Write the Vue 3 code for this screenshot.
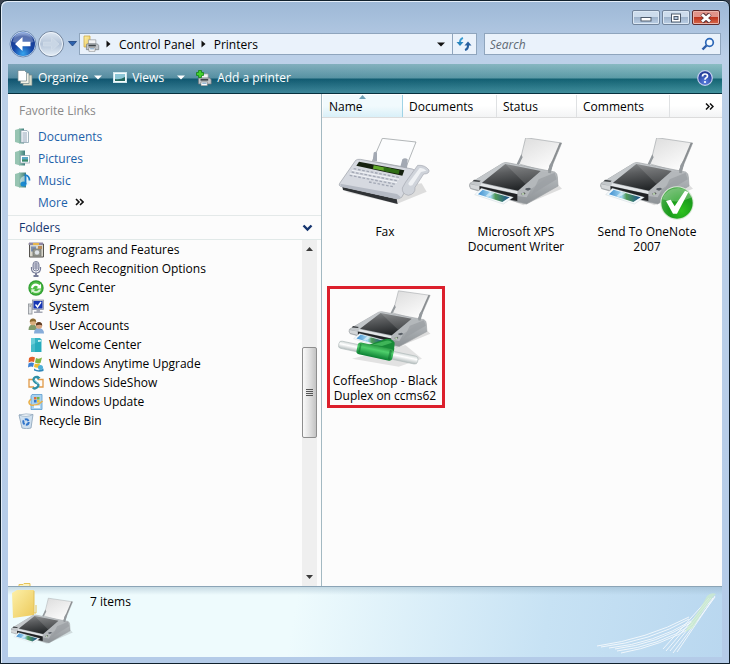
<script setup>
import { ref } from 'vue'

const search = ref('')

const columns = [
  { label: 'Name', key: 'name' },
  { label: 'Documents', key: 'documents' },
  { label: 'Status', key: 'status' },
  { label: 'Comments', key: 'comments' },
]

const favorites = [
  { label: 'Documents', icon: 'fav-doc' },
  { label: 'Pictures', icon: 'fav-pic' },
  { label: 'Music', icon: 'fav-music' },
]

const folders = [
  { label: 'Programs and Features', icon: 't-programs' },
  { label: 'Speech Recognition Options', icon: 't-speech' },
  { label: 'Sync Center', icon: 't-sync' },
  { label: 'System', icon: 't-system' },
  { label: 'User Accounts', icon: 't-users' },
  { label: 'Welcome Center', icon: 't-welcome' },
  { label: 'Windows Anytime Upgrade', icon: 't-upgrade' },
  { label: 'Windows SideShow', icon: 't-sideshow' },
  { label: 'Windows Update', icon: 't-update' },
  { label: 'Recycle Bin', icon: 't-recycle', root: true },
]

const printers = [
  { name: 'Fax', icon: 'i-fax', box: '18 54 330 258' },
  { name: 'Microsoft XPS Document Writer', icon: 'i-printer', box: '6 54 330 258' },
  { name: 'Send To OneNote 2007', icon: 'i-printer', box: '6 54 330 258', isDefault: true },
  { name: 'CoffeeShop - Black Duplex on ccms62', icon: 'i-network', box: '27 21 330 258', marked: true },
]
</script>

<template>
  <div class="window">
    <svg class="defs" width="0" height="0" aria-hidden="true">
      <defs>
        <linearGradient id="g-lid" x1="0" y1="0" x2="0.3" y2="1">
          <stop offset="0" stop-color="#8b8e90" /><stop offset="0.4" stop-color="#5b5d5f" /><stop offset="1" stop-color="#25282a" />
        </linearGradient>
        <linearGradient id="g-paper" x1="0" y1="0" x2="0.6" y2="1">
          <stop offset="0" stop-color="#dcdcdc" /><stop offset="1" stop-color="#fdfdfd" />
        </linearGradient>
        <linearGradient id="g-side" x1="0" y1="0" x2="0" y2="1">
          <stop offset="0" stop-color="#c6cacd" /><stop offset="1" stop-color="#8d9296" />
        </linearGradient>
        <linearGradient id="g-photo" x1="0" y1="0" x2="1" y2="0">
          <stop offset="0" stop-color="#3f8ed0" /><stop offset="0.4" stop-color="#9fd4ee" /><stop offset="0.55" stop-color="#4f9a58" /><stop offset="1" stop-color="#1b4f92" />
        </linearGradient>
        <radialGradient id="g-check" cx="0.65" cy="0.75" r="0.8">
          <stop offset="0" stop-color="#2fc21f" /><stop offset="0.5" stop-color="#1a9c1b" /><stop offset="1" stop-color="#4fae50" />
        </radialGradient>
        <linearGradient id="g-pipe" x1="0" y1="0" x2="0" y2="1">
          <stop offset="0" stop-color="#2b9a45" /><stop offset="0.35" stop-color="#4fcf6c" /><stop offset="1" stop-color="#0b8032" />
        </linearGradient>
        <linearGradient id="g-glass" x1="0" y1="0" x2="0" y2="1">
          <stop offset="0" stop-color="#d3dad9" /><stop offset="0.4" stop-color="#ffffff" /><stop offset="1" stop-color="#b5bebe" />
        </linearGradient>
        <linearGradient id="g-book" x1="0" y1="0" x2="1" y2="0">
          <stop offset="0" stop-color="#8fc0ac" /><stop offset="1" stop-color="#3f7d7c" />
        </linearGradient>
        <linearGradient id="g-folder" x1="0" y1="0" x2="1" y2="1">
          <stop offset="0" stop-color="#fdf0a8" /><stop offset="1" stop-color="#ecc95a" />
        </linearGradient>
        <radialGradient id="g-back" cx="0.5" cy="0.9" r="0.9">
          <stop offset="0" stop-color="#37a5ee" /><stop offset="0.45" stop-color="#1746a6" /><stop offset="0.8" stop-color="#1a3d93" /><stop offset="1" stop-color="#8fb0e6" />
        </radialGradient>
        <linearGradient id="g-fwd" x1="0" y1="0" x2="0" y2="1">
          <stop offset="0" stop-color="#dfe8f3" /><stop offset="0.5" stop-color="#b4c4d8" /><stop offset="1" stop-color="#e6eff8" />
        </linearGradient>
        <radialGradient id="g-help" cx="0.5" cy="0.8" r="0.8">
          <stop offset="0" stop-color="#5a7fe0" /><stop offset="1" stop-color="#1a2f8c" />
        </radialGradient>

        <g id="i-printer">
          <path d="M60 205 L190 256 L306 206 L290 190 Z" fill="#000" opacity="0.12" />
          <path d="M197 53 L305 69 L268 158 L178 132 Z" fill="url(#g-paper)" stroke="#a3a7aa" stroke-width="2" />
          <path d="M305 69 L268 158 L262 155 L299 68 Z" fill="#8a8e91" />
          <path d="M30 190 L128 130 Q134 127 142 128 L284 156 Q292 160 292 170 L294 198 L200 252 L172 246 L32 206 Q26 198 30 190 Z" fill="url(#g-side)" stroke="#9a9ea1" stroke-width="2" />
          <path d="M30 190 L128 130 L142 128 L66 190 L62 200 Z" fill="#c3c7ca" />
          <path d="M172 213 L240 154 L284 157 L214 206 L200 232 L172 228 Z" fill="#b4b8bb" />
          <path d="M236 178 L284 158 L290 178 L214 224 Z" fill="#999da1" opacity="0.7" />
          <path d="M66 188 L136 132 L242 153 L174 212 Z" fill="url(#g-lid)" />
          <path d="M136 132 L242 153 L196 192 Z" fill="#fff" opacity="0.13" />
          <path d="M64 190 L173 214 L172 222 L60 197 Z" fill="#e3e6e8" />
          <path d="M58 198 L172 223 L172 243 L150 239 L58 212 Z" fill="#202224" />
          <path d="M30 193 L58 198 L58 211 L32 204 Z" fill="#d4d7d9" />
          <path d="M42 179 L62 182 L58 186 L38 184 Z" fill="#3c3f42" />
          <path d="M64 205 L160 232 L130 252 L44 224 Z" fill="#f5fafc" stroke="#b9c4cb" stroke-width="1" />
          <path d="M68 209 L149 232 L127 246 L54 223 Z" fill="url(#g-photo)" />
          <path d="M90 216 L104 220 L84 231 L76 229 Z" fill="#eaf7fb" opacity="0.6" />
          <path d="M197 205 L208 203 L214 207 L204 212 L196 209 Z" fill="#565c63" />
          <path d="M183 221 L193 217 L197 221 L187 226 Z" fill="#5f665f" />
          <circle cx="189" cy="222" r="3" fill="#c8e4bd" />
          <path d="M184 103 L188 112 L176 134 L170 132 Z M276 123 L279 133 L272 160 L264 158 L268 136 Z" fill="#94999d" />
        </g>

        <g id="i-check">
          <circle cx="258" cy="249" r="50" fill="#d6e7d3" />
          <circle cx="258" cy="249" r="47" fill="url(#g-check)" />
          <path d="M214 238 Q224 206 262 204 Q296 208 302 232 Q262 254 214 238 Z" fill="#fff" opacity="0.25" />
          <path d="M225 243 L239 239 L251 259 L282 212 L292 217 L258 281 L246 281 Z" fill="#fff" />
        </g>

        <g id="i-fax">
          <path d="M60 215 L215 252 L305 215 L290 190 Z" fill="#000" opacity="0.12" />
          <path d="M172 55 L273 66 L243 142 L142 124 Z" fill="#fcfdfe" stroke="#8d9296" stroke-width="2" />
          <path d="M146 98 Q152 92 156 99 L156 124 L143 122 Z M232 118 Q240 112 248 118 L246 146 L226 140 Z" fill="#a3a9b3" />
          <path d="M52 200 L215 237 L218 252 L54 210 Z" fill="#2f3235" />
          <path d="M92 121 Q96 117 106 118 L262 147 Q272 150 272 158 L230 232 Q222 238 212 236 L46 199 Q40 196 44 190 Z" fill="#d6d9e0" stroke="#9a9ea6" stroke-width="2" />
          <path d="M46 191 L216 222 L228 232 L216 237 L48 200 Z" fill="#b5bac4" />
          <path d="M102 125 L238 151 L232 167 L94 137 Z" fill="#16210f" />
          <path d="M146 136 L198 146 L196 156 L144 146 Z" fill="#61a92b" />
          <path d="M176 141 L224 151 L221 162 L176 153 Z" fill="#2f6d15" />
          <g stroke="#a2a7b4" stroke-width="4" stroke-dasharray="8 5" fill="none">
            <path d="M86 146 L226 173" /><path d="M80 156 L220 183" /><path d="M74 166 L214 193" /><path d="M132 186 L208 201" />
          </g>
          <path d="M81 151 L222 178 M75 161 L216 188" stroke="#f2f4f8" stroke-width="3" fill="none" />
          <path d="M242 186 L278 136 Q300 134 312 150 Q314 162 296 162 L270 202 Q272 222 250 226 Q230 222 232 204 Z" fill="#cfd3da" stroke="#a4a8b0" stroke-width="2" />
          <path d="M250 190 L284 144 Q296 142 304 152 L288 156 L262 196 Q250 200 250 190 Z" fill="#eff1f4" />
        </g>

        <g id="i-network">
          <path d="M90 236 L230 260 L300 236 L250 195 Z" fill="#000" opacity="0.1" />
          <use href="#i-printer" transform="translate(56 -12) scale(0.88 0.84)" />
          <path d="M136 196 L190 177 Q210 174 218 188 L216 214 L180 222 Z" fill="#188b38" />
          <path d="M150 194 L192 182 Q206 180 210 188 L180 198 Z" fill="#3fb458" />
          <g transform="rotate(12 170 217)">
            <rect x="48" y="207" width="70" height="22" rx="8" fill="url(#g-glass)" stroke="#b3bcbc" stroke-width="2" />
            <rect x="206" y="205" width="84" height="24" rx="9" fill="url(#g-glass)" stroke="#b3bcbc" stroke-width="2" />
            <rect x="104" y="199" width="110" height="36" rx="9" fill="url(#g-pipe)" />
            <rect x="110" y="204" width="5" height="26" rx="2" fill="#0a6a29" opacity="0.5" />
            <rect x="201" y="203" width="7" height="29" rx="3" fill="#0a6a29" opacity="0.5" />
          </g>
        </g>

        <g id="fav-doc">
          <path d="M0 2 L5 0.500 L5 15.500 L0 14 Z" fill="#97c4b2" /><path d="M4 0.500 H9 V15.500 H4 Z" fill="url(#g-book)" />
          <path d="M6 2.500 H12 L13.500 4 V14.500 H6 Z" fill="#f8fbfd" stroke="#8ea3b0" stroke-width="0.800" />
          <path d="M7.500 5 H12 M7.500 7 H12 M7.500 9 H12 M7.500 11 H12 M7.500 13 H12" stroke="#7d93a8" stroke-width="0.800" />
        </g>
        <g id="fav-pic">
          <path d="M0 2 L5 0.500 L5 15.500 L0 14 Z" fill="#97c4b2" /><path d="M4 0.500 H10 V15.500 H4 Z" fill="url(#g-book)" />
          <rect x="5.500" y="5.500" width="9" height="7.500" fill="#fff" stroke="#9aaab5" stroke-width="0.800" />
          <rect x="7" y="7" width="6" height="4.500" fill="#5aa6c4" /><rect x="7" y="9.500" width="6" height="2" fill="#3d8a66" />
        </g>
        <g id="fav-music">
          <path d="M0 2 L5 0.500 L5 15.500 L0 14 Z" fill="#97c4b2" /><path d="M4 0.500 H11 V15.500 H4 Z" fill="url(#g-book)" />
          <circle cx="10" cy="9" r="5" fill="#d8f0f8" opacity="0.6" />
          <ellipse cx="8.500" cy="12" rx="3" ry="2.500" fill="#1b8bd0" />
          <path d="M10.500 12 V3 Q14.500 4 14.500 8.500" stroke="#1b7fc8" stroke-width="1.800" fill="none" />
        </g>

        <g id="t-programs">
          <path d="M0.500 2 H15.500 V15 H1.500 V3" fill="#d8d6cb" stroke="#55534f" /><path d="M1 0.500 H15 V3 H1 Z" fill="#8e86a4" />
          <rect x="5" y="1" width="6" height="2" fill="#e8b64c" /><rect x="3" y="4.500" width="5" height="5" fill="#7c8fb2" />
          <rect x="5" y="7" width="8" height="7" fill="#95978f" stroke="#6d6f6a" stroke-width="0.700" /><circle cx="9" cy="10.500" r="2.200" fill="#dfe4ea" />
          <rect x="10" y="4" width="4" height="3" fill="#b98a5a" />
        </g>
        <g id="t-speech">
          <rect x="5" y="0.500" width="6" height="9.500" rx="3" fill="#e7e9f1" stroke="#7d829c" />
          <path d="M5 3 H11 M5 5 H11 M5 7 H11 M8 1 V9" stroke="#7d829c" stroke-width="0.900" />
          <path d="M3.500 6 V8 Q4 12 8 12 Q12 12 12.500 8 V6" fill="none" stroke="#757b97" stroke-width="1.200" /><path d="M8 12 V14 M5.500 15 H10.500" stroke="#757b97" stroke-width="1.800" />
        </g>
        <g id="t-sync">
          <circle cx="8" cy="8" r="7.700" fill="#2f9e31" /><circle cx="8" cy="8" r="6.500" fill="#4dbb45" />
          <path d="M3 8 Q3.500 3.500 8 3.500 Q10 3.500 11.500 5 L13 4 V8.500 H8.500 L10 7 Q8 5 6 6.500 Q5 7.500 5 8.500 Z" fill="#fff" />
          <path d="M13 9.500 Q12 13 8 13 Q6 13 4.500 11.800 L3.300 13 V9.300 H7 L6 10.500 Q8 12 10 10.500 L10.800 9.500 Z" fill="#d7f4d2" />
        </g>
        <g id="t-system">
          <rect x="0.500" y="5" width="3.500" height="10" fill="#dcdfe2" stroke="#8b9096" stroke-width="0.800" /><path d="M1.500 7 H3" stroke="#777" />
          <rect x="4.500" y="1" width="11" height="9.500" fill="#c6c9d2" stroke="#8288a0" stroke-width="0.700" /><rect x="5.500" y="2" width="9" height="7.500" fill="#1636b4" />
          <path d="M7.500 5.500 L9.500 8 L13 3" stroke="#fff" stroke-width="1.400" fill="none" /><path d="M8.500 11 H12 V12.500 H14.500 V14 H6 V12.500 H8.500 Z" fill="#a4a8b4" />
        </g>
        <g id="t-users">
          <path d="M0.500 12 Q0.500 6.500 5 6.500 Q9 7 9 12 Z" fill="#7f9a6b" /><circle cx="5" cy="4" r="3.200" fill="#d9b07e" /><path d="M1.800 4 Q1.800 0.500 5 0.500 Q8.200 0.500 8.200 4 Q6 2.500 1.800 4 Z" fill="#8b6a32" />
          <path d="M6 15.500 Q6 10 11 10 Q16 10.500 16 15.500 Z" fill="#86acd9" /><circle cx="11" cy="7.500" r="3.200" fill="#d8a683" /><path d="M7.800 7.500 Q7.800 4 11 4 Q14.200 4 14.200 7.500 Q12 6 7.800 7.500 Z" fill="#5d3c24" />
        </g>
        <g id="t-welcome">
          <path d="M3 1 H12 L13.500 2.500 V15 H3 Z" fill="#35b4c4" /><path d="M3 1 H7 V15 H3 Z" fill="#68cdd8" /><path d="M10 3 H13 V5 H10 Z" fill="#c5f2f4" /><path d="M3 8 L13 4 V15 H3 Z" fill="#139fb3" opacity="0.4" />
        </g>
        <g id="t-upgrade">
          <path d="M1 2 Q4 0 7 1.500 L6 6 Q3.500 5 0.500 6.500 Z" fill="#e2602b" /><path d="M8 2 Q11 3.500 14 1.500 L12.500 7 Q10 8 7 6.500 Z" fill="#82b541" />
          <path d="M0.500 7.500 Q3 6 6 7 L5 11 Q3 10 0 11.500 Z" fill="#3c80d2" /><path d="M6.800 7.500 Q9 8.500 12 7.500 L11 11.500 Q8.500 12 6 11 Z" fill="#f0be33" />
          <path d="M6 12.500 Q10 16 15.500 12.500 V15 Q10 16.500 6 14.500 Z" fill="#2f87ba" /><circle cx="12.500" cy="11.500" r="2.500" fill="#4fb0d8" />
        </g>
        <g id="t-sideshow">
          <path d="M5 4.500 H1 V12 H6 M10 4.500 H15 V12 H11" fill="none" stroke="#e19a48" stroke-width="1.300" />
          <path d="M10.500 2.500 Q6 1 5.500 4.500 Q6 7 9.500 8.500 Q12 11 8 13 Q6 14 5 12.500" fill="none" stroke="#2f8fa6" stroke-width="2.400" />
          <path d="M9 0.500 L12.500 2.500 L9.500 5 Z" fill="#2f8fa6" /><path d="M6.500 5 L10.500 9" stroke="#a9e2ec" />
        </g>
        <g id="t-update">
          <path d="M4 0.500 H14 V15.500 H3 V2 Z" fill="#a9d2ef" stroke="#5c9cce" stroke-width="0.800" /><path d="M6 3 H8.500 V5.500 H6 Z" fill="#de6a35" /><path d="M9 3 H11.500 V5.500 H9 Z" fill="#75b443" /><path d="M6 6 H8.500 V8.500 H6 Z" fill="#3374cc" /><path d="M9 6 H11.500 V8.500 H9 Z" fill="#efc53a" />
          <path d="M3 5 Q-1 9 3 11 Q9 12.500 14.500 7" fill="none" stroke="#e9b04a" stroke-width="1.600" /><rect x="6" y="11.500" width="6" height="2.500" fill="#f3f9fd" />
        </g>
        <g id="t-recycle">
          <path d="M1 2 L15 1.500 L13 15 Q8 16.500 4 15 Z" fill="#cfe0ef" stroke="#93a9bd" stroke-width="0.900" /><path d="M1 2 Q8 5 15 1.500 Q8 0 1 2 Z" fill="#f2f7fb" stroke="#93a9bd" stroke-width="0.700" />
          <circle cx="8" cy="9" r="2.700" fill="none" stroke="#2f74cb" stroke-width="2" stroke-dasharray="4.300 1.300" />
        </g>

        <g id="s-printer">
          <path d="M3 1 H12 V6 H3 Z" fill="#f3f4f5" stroke="#8a8f94" stroke-width="0.800" />
          <path d="M1 6 H14 L15.500 8 V13 H0.500 V7 Z" fill="#c2c6ca" stroke="#6f757b" stroke-width="0.800" /><path d="M3 7 H12 V9 H3 Z" fill="#3f4549" /><path d="M3.500 10.500 H11 V15 H3.500 Z" fill="#fff" stroke="#777" stroke-width="0.700" /><path d="M5 12 H10" stroke="#4f86b8" />
        </g>
      </defs>
    </svg>

    <header class="titlebar">
      <button class="cap" aria-label="Minimize">
        <svg width="12" height="9" viewBox="0 0 12 9"><rect x="1" y="4.500" width="10" height="3.500" fill="#fff" stroke="#4d5a6b" /></svg>
      </button>
      <button class="cap" aria-label="Maximize">
        <svg width="12" height="10" viewBox="0 0 12 10"><rect x="1.500" y="1" width="9" height="8" fill="#fff" stroke="#4d5a6b" /><rect x="4" y="3.500" width="4" height="3" fill="#b5c8de" stroke="#4d5a6b" /></svg>
      </button>
      <button class="cap close" aria-label="Close">
        <svg width="14" height="10" viewBox="0 0 14 10"><path d="M3 1 L11 9 M11 1 L3 9" stroke="#5b3036" stroke-width="4.500" /><path d="M3 1.500 L11 8.500 M11 1.500 L3 8.500" stroke="#fff" stroke-width="2.800" /></svg>
      </button>
    </header>

    <nav class="navrow" aria-label="Navigation">
      <div class="travel">
        <button class="plain" aria-label="Back">
          <svg width="28" height="28" viewBox="0 0 28 28"><circle cx="14" cy="14" r="13" fill="#e3edf8" stroke="#6e8cb4" /><circle cx="14" cy="14" r="12" fill="url(#g-back)" /><path d="M3.500 12 Q5 3 14 3 Q23 3 24.500 12 Q14 15 3.500 12 Z" fill="#fff" opacity="0.28" /><path d="M6 14 L13.500 7 V11.800 H21.500 V16.200 H13.500 V21 Z" fill="#fff" /></svg>
        </button>
        <button class="plain" aria-label="Forward">
          <svg width="28" height="28" viewBox="0 0 28 28"><circle cx="14" cy="14" r="12.500" fill="url(#g-fwd)" stroke="#71839b" /><circle cx="14" cy="14" r="11.500" fill="none" stroke="#eef4fa" /><path d="M22 14 L14.500 7.500 V12 H6.500 V16 H14.500 V20.500 Z" fill="#c9d6e5" stroke="#d3deea" stroke-width="0.700" /></svg>
        </button>
        <button class="plain recent" aria-label="Recent pages">
          <svg width="11" height="8" viewBox="0 0 11 8"><path d="M1.500 1.500 H9.500 L5.500 6 Z" fill="#2d62ad" stroke="#1e447e" stroke-width="0.800" /></svg>
        </button>
      </div>
      <div class="address">
        <svg class="ico" width="18" height="18" viewBox="0 0 18 18"><path d="M2 1 H8 V12 H2 Z" fill="url(#g-folder)" stroke="#c9a236" stroke-width="0.700" /><g transform="translate(4 4) scale(0.820)"><use href="#s-printer" /></g></svg>
        <svg class="sep" width="5" height="8" viewBox="0 0 5 8"><path d="M0.500 0.500 L4.500 4 L0.500 7.500 Z" fill="#111" /></svg>
        <a href="#">Control Panel</a>
        <svg class="sep" width="5" height="8" viewBox="0 0 5 8"><path d="M0.500 0.500 L4.500 4 L0.500 7.500 Z" fill="#111" /></svg>
        <a href="#">Printers</a>
        <button class="plain drop" aria-label="Previous locations">
          <svg width="8" height="5" viewBox="0 0 8 5"><path d="M0 0.500 H8 L4 4.500 Z" fill="#111" /></svg>
        </button>
        <button class="plain refresh" aria-label="Refresh">
          <svg width="16" height="16" viewBox="0 0 16 16"><path d="M7 2 Q3.500 3 4 8" fill="none" stroke="#3a9bd0" stroke-width="2" /><path d="M0.500 6 H7.500 L4 10 Z" fill="#2a84bd" /><path d="M9 14 Q12.500 13 12 8" fill="none" stroke="#275f9f" stroke-width="2" /><path d="M8.500 9.500 H15.500 L12 5.500 Z" fill="#275f9f" /></svg>
        </button>
      </div>
      <label class="search">
        <input v-model="search" type="text" placeholder="Search" aria-label="Search" />
        <svg width="14" height="14" viewBox="0 0 14 14"><circle cx="8.500" cy="5.500" r="3.800" fill="#f4faff" stroke="#2d68b8" stroke-width="1.700" /><path d="M5.500 8.500 L1.500 12.500" stroke="#2d5da8" stroke-width="2.400" /></svg>
      </label>
    </nav>

    <div class="toolbar">
      <button class="tool">
        <svg width="16" height="16" viewBox="0 0 16 16"><path d="M6 5 H15 V15.500 H6 Z" fill="#d9dcc9" stroke="#71878c" stroke-width="0.700" /><path d="M3.500 3 H12 V13.500 H3.500 Z" fill="#f4f2e6" stroke="#71878c" stroke-width="0.700" /><path d="M1 0.500 H7.500 L9.500 2.500 V11 H1 Z" fill="#fff" stroke="#71878c" stroke-width="0.700" /></svg>
        <span>Organize</span>
        <svg class="caret" width="8" height="5" viewBox="0 0 8 5"><path d="M0 0.500 H8 L4 4.500 Z" fill="#fff" /></svg>
      </button>
      <button class="tool views">
        <svg width="14" height="12" viewBox="0 0 14 12"><rect x="0.500" y="0.500" width="13" height="10" fill="#f5fbfd" stroke="#cfe6ec" /><rect x="2" y="2" width="10" height="7" fill="#8cc6d6" /><path d="M2 9 V7 Q7 8 12 5 V9 Z" fill="#24685f" /></svg>
        <span>Views</span>
        <svg class="caret wide" width="8" height="5" viewBox="0 0 8 5"><path d="M0 0.500 H8 L4 4.500 Z" fill="#fff" /></svg>
      </button>
      <button class="tool">
        <svg width="16" height="16" viewBox="0 0 16 16"><g transform="translate(2 3) scale(0.850)"><use href="#s-printer" /></g><path d="M2.500 0.500 H5.500 V2.500 H7.500 V5.500 H5.500 V7.500 H2.500 V5.500 H0.500 V2.500 H2.500 Z" fill="#43cf2c" stroke="#14801a" stroke-width="0.800" /></svg>
        <span>Add a printer</span>
      </button>
      <button class="plain help" aria-label="Help">
        <svg width="16" height="16" viewBox="0 0 16 16"><circle cx="8" cy="8" r="7.300" fill="url(#g-help)" stroke="#c3cdee" stroke-width="1.200" /><path d="M5.500 6.500 Q5.500 4 8 4 Q10.500 4 10.500 6 Q10.500 7.300 9 8 Q8 8.500 8 9.700" fill="none" stroke="#fff" stroke-width="1.700" /><circle cx="8" cy="12" r="1.100" fill="#fff" /></svg>
      </button>
    </div>

    <div class="content">
      <aside class="sidebar">
        <section class="favorites">
          <h2>Favorite Links</h2>
          <a v-for="f in favorites" :key="f.label" href="#">
            <svg width="16" height="16" viewBox="0 0 16 16"><use :href="'#' + f.icon" /></svg>{{ f.label }}
          </a>
          <a href="#" class="more">More
            <svg width="9" height="8" viewBox="0 0 9 8"><path d="M1 1 L4 4 L1 7 M5 1 L8 4 L5 7" fill="none" stroke="#111" stroke-width="1.600" /></svg>
          </a>
        </section>
        <button class="folders-head">
          Folders
          <svg width="11" height="8" viewBox="0 0 11 8"><path d="M1.500 1.500 L5.500 5.500 L9.500 1.500" fill="none" stroke="#15356f" stroke-width="2.400" /></svg>
        </button>
        <div class="tree-area">
          <ul class="tree">
            <li v-for="f in folders" :key="f.label" :class="{ root: f.root }">
              <svg width="16" height="16" viewBox="0 0 16 16"><use :href="'#' + f.icon" /></svg>{{ f.label }}
            </li>
            <li class="cut">
              <svg width="16" height="3" viewBox="0 0 16 3"><path d="M2 3 V1.500 H6 L7 0.500 H13 V3" fill="#fdf3c0" stroke="#e6c35a" /></svg>
            </li>
          </ul>
          <div class="scroll">
            <button class="plain arrow" aria-label="Scroll up"><svg width="7" height="4" viewBox="0 0 7 4"><path d="M0 4 L3.500 0 L7 4 Z" fill="#3b3b3b" /></svg></button>
            <div class="before"></div>
            <div class="thumb"><i></i><i></i><i></i><i></i></div>
            <div class="after"></div>
            <button class="plain arrow" aria-label="Scroll down"><svg width="7" height="4" viewBox="0 0 7 4"><path d="M0 0 H7 L3.500 4 Z" fill="#3b3b3b" /></svg></button>
          </div>
        </div>
      </aside>

      <main class="files">
        <div class="columns">
          <button v-for="c in columns" :key="c.key" :class="['col', c.key]">
            {{ c.label }}
            <svg v-if="c.key === 'name'" class="sort" width="7" height="4" viewBox="0 0 7 4"><path d="M0 4 L3.500 0 L7 4 Z" fill="#6c9fb4" /></svg>
          </button>
          <button class="col rest" aria-label="More columns">
            <svg width="9" height="7" viewBox="0 0 9 7"><path d="M1 0.500 L4 3.500 L1 6.500 M5 0.500 L8 3.500 L5 6.500" fill="none" stroke="#111" stroke-width="1.500" /></svg>
          </button>
        </div>
        <ul class="grid">
          <li v-for="p in printers" :key="p.name" :class="['tile', { marked: p.marked }]">
            <svg width="110" height="86" :viewBox="p.box"><use :href="'#' + p.icon" /><use v-if="p.isDefault" href="#i-check" /></svg>
            <span>{{ p.name }}</span>
          </li>
        </ul>
      </main>
    </div>

    <footer class="details">
      <svg class="big" width="66" height="66" viewBox="0 0 66 66">
        <path d="M1 6 L6 3 H23 V28 L2 31 Z" fill="url(#g-folder)" />
        <path d="M23 4 V26 H25 V18" fill="none" stroke="#e3c158" />
        <g transform="translate(-7 -12) scale(0.225)"><use href="#i-printer" y="50" /></g>
      </svg>
      <p>7 items</p>
      <svg class="swoosh" width="122" height="64" viewBox="0 0 122 64">
        <g fill="none" stroke="#fff" stroke-width="0.900" opacity="0.85">
          <path d="M0 54 Q50 47 92 25" /><path d="M4 55 Q54 49 92 27" /><path d="M12 56 Q58 51 94 29" /><path d="M18 57 Q60 52 95 30" /><path d="M20 59 Q62 54 96 32" /><path d="M24 61 Q64 54 97 34" />
          <path d="M66 57 L112 6" /><path d="M69 59 L114 6" /><path d="M73 59 L116 6" /><path d="M76 61 L118 5" /><path d="M80 60 L118 4" />
        </g>
        <path d="M90 36 Q104 16 110 4 Q114 0 119 2 Q112 8 96 36 L88 40 Z" fill="#cdecc9" opacity="0.7" />
      </svg>
    </footer>
  </div>
</template>

<style>
body {
  background: #3b4350;
}
</style>

<style scoped>
* {
  box-sizing: border-box;
}
.window {
  display: flex;
  flex-direction: column;
  min-height: 100vh;
  padding: 0 7px 6px;
  border: 1px solid #10202c;
  border-radius: 7px 7px 0 0;
  background: linear-gradient(#9db8d6 0, #bcd0e8 56px, #b4cbe8 100%);
  box-shadow: inset 1px 1px 0 #e4eef9;
  font: 12px/15px "Open Sans", "Liberation Sans", sans-serif;
  color: #000;
}
.defs {
  position: absolute;
}
button,
input {
  font: inherit;
  color: inherit;
  border: 0;
  padding: 0;
  margin: 0;
  background: none;
}
a {
  text-decoration: none;
  color: inherit;
}
ul,
p,
h2 {
  margin: 0;
  padding: 0;
  list-style: none;
  font-weight: 400;
}
svg {
  flex: none;
}
.plain {
  display: flex;
  align-items: center;
  justify-content: center;
}
.titlebar {
  display: flex;
  justify-content: flex-end;
  gap: 2px;
  height: 29px;
  padding: 9px 2px 0 0;
}
.cap {
  display: flex;
  align-items: center;
  justify-content: center;
  width: 28px;
  height: 15px;
  border: 1px solid #71839a;
  border-radius: 2px;
  background: linear-gradient(#cddcec 45%, #9fb4cc 50%, #bcd0e6);
  box-shadow: inset 0 0 0 1px #dce8f4;
}
.close {
  border-color: #5f2a2c;
  background: linear-gradient(#e0938a 45%, #bd3520 50%, #d8694a);
  box-shadow: inset 0 0 0 1px #eab3aa;
}
.navrow {
  display: flex;
  align-items: center;
  height: 28px;
  margin-bottom: 6px;
  padding-right: 1px;
}
.travel {
  display: flex;
  align-items: center;
  flex: none;
  width: 71px;
  padding-left: 1px;
}
.recent {
  flex: 1;
}
.address,
.search {
  display: flex;
  align-items: center;
  height: 22px;
  border: 1px solid #8fa5bd;
  background: #eaf2fb;
}
.address {
  flex: 404;
  min-width: 0;
}
.address .ico {
  margin-left: 2px;
}
.sep {
  margin: 0 8px 0 6px;
}
.drop {
  width: 21px;
  height: 100%;
  margin-left: auto;
}
.refresh {
  width: 24px;
  height: 100%;
  border-left: 1px solid #8fa5bd;
}
.search {
  flex: 230;
  min-width: 0;
  margin-left: 7px;
  padding: 0 5px;
}
.search input {
  flex: 1;
  min-width: 0;
  outline: none;
}
.search input::placeholder {
  color: #5f6a75;
  font-style: italic;
  opacity: 1;
}
.toolbar {
  display: flex;
  align-items: center;
  height: 30px;
  padding: 0 9px 2px;
  border-bottom: 1px solid #06303e;
  background: linear-gradient(90deg, rgba(10, 60, 110, 0.25), rgba(30, 140, 130, 0.18)), linear-gradient(#a3c8d2, #6ba3b0 48%, #125c70 52%, #4a93a3);
}
.tool {
  display: flex;
  align-items: center;
  gap: 5px;
  margin-right: 11px;
  color: #fff;
}
.caret {
  margin-left: 1px;
}
.wide {
  margin-left: 8px;
}
.help {
  margin-left: auto;
}
.content {
  display: grid;
  grid-template-columns: 314px 1fr;
  flex: 1;
  background: #fcfcfc;
}
.sidebar {
  display: flex;
  flex-direction: column;
  border-right: 1px solid #a3b9c2;
}
.favorites {
  padding-bottom: 2px;
  border-bottom: 1px solid #e4e9e9;
  color: #1c62aa;
}
.favorites h2 {
  padding: 9px 11px 7px;
  font-size: 12px;
  line-height: 15px;
  color: #8a8a8a;
}
.favorites a {
  display: flex;
  align-items: center;
  gap: 7px;
  height: 22px;
  padding-left: 7px;
}
.favorites .more {
  padding-left: 30px;
}
.folders-head {
  display: flex;
  align-items: center;
  justify-content: space-between;
  height: 24px;
  padding: 0 8px 0 11px;
  border-bottom: 1px solid #e1e9e8;
  color: #15356f;
}
.tree-area {
  display: flex;
  flex: 1;
}
.tree {
  display: flex;
  flex-direction: column;
  flex: 1;
}
.tree li {
  display: flex;
  align-items: center;
  gap: 5px;
  height: 19px;
  padding-left: 20px;
}
.tree .root {
  padding-left: 10px;
}
.tree .cut {
  height: 3px;
  margin-top: auto;
  padding-left: 9px;
}
.scroll {
  display: flex;
  flex-direction: column;
  width: 15px;
  margin-right: 4px;
  background: #efefef;
}
.arrow {
  height: 18px;
}
.before {
  flex: 90;
}
.after {
  flex: 131;
}
.thumb {
  display: flex;
  flex: 89;
  flex-direction: column;
  align-items: center;
  justify-content: center;
  gap: 1px;
  border: 1px solid #8e8e8e;
  border-radius: 2px;
  background: linear-gradient(90deg, #fafafa, #e4e4e4 45%, #c3c3c3);
}
.thumb i {
  width: 7px;
  height: 1px;
  background: #555;
}
.files {
  min-width: 0;
}
.columns {
  display: flex;
  height: 24px;
  padding: 1px 0 0 1px;
  border-bottom: 1px solid #dcdcdc;
  background: linear-gradient(#fff 50%, #f3f4f5);
}
.col {
  position: relative;
  padding-left: 6px;
  border-right: 1px solid #dfe1e3;
  text-align: left;
}
.name {
  width: 80px;
  border-color: #9fd3e6;
  background: linear-gradient(#f1fafd 50%, #d9f0f8);
}
.documents {
  width: 94px;
}
.status {
  width: 80px;
}
.comments {
  width: 93px;
}
.sort {
  position: absolute;
  top: 0;
  left: 45%;
}
.rest {
  display: flex;
  align-items: center;
  justify-content: flex-end;
  flex: 1;
  padding: 0 8px 0 0;
  border-right: 0;
}
.grid {
  display: flex;
  flex-wrap: wrap;
  gap: 29px 15px;
  padding: 20px 6px;
}
.tile {
  display: flex;
  flex-direction: column;
  align-items: center;
  width: 116px;
  height: 120px;
  text-align: center;
}
.tile span {
  padding: 0 6px 0 4px;
}
.marked {
  outline: 3px solid #dc1f2c;
  outline-offset: -2px;
}
.details {
  display: flex;
  align-items: flex-start;
  height: 71px;
  padding: 0 3px;
  border-top: 1px solid #8ba4b6;
  background: linear-gradient(rgba(140, 170, 190, 0.4), rgba(255, 255, 255, 0) 8px), linear-gradient(100deg, #eefbfd 40%, #c7e2f4 75%, #b9d7ef);
}
.details p {
  padding: 7px 0 0 13px;
}
.swoosh {
  margin: 5px 0 0 auto;
}
</style>
